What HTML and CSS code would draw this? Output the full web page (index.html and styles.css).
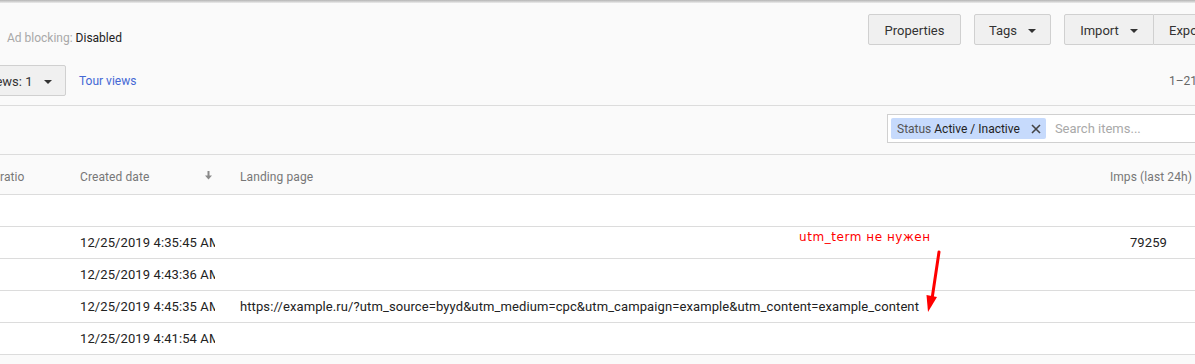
FILE: index.html
```html
<!DOCTYPE html>
<html>
<head>
<meta charset="utf-8">
<link rel="stylesheet" href="styles.css">
</head>
<body>
<div class="page">
  <div class="shadow"></div>
  <section class="toolbar">
    <div class="row1">
      <div class="adblock"><span class="muted">Ad blocking:</span> Disabled</div>
      <div class="actions">
        <button class="btn btn-props">Properties</button>
        <button class="btn btn-tags">Tags <span class="caret"></span></button>
        <div class="group">
          <button class="btn btn-import">Import <span class="caret"></span></button>
          <button class="btn btn-export">Export</button>
        </div>
      </div>
    </div>
    <div class="row2">
      <div class="left2">
        <button class="btn btn-views">Views: 1 <span class="caret"></span></button>
        <a class="tour" href="#">Tour views</a>
      </div>
      <div class="paging">1–21 of 21</div>
    </div>
  </section>
  <section class="filterbar">
    <div class="search">
      <span class="chip"><span class="chip-key">Status</span> Active / Inactive <svg class="chip-x" width="10" height="10" viewBox="0 0 10 10"><path d="M1 1 L9 9 M9 1 L1 9" stroke="#444" stroke-width="1.6"/></svg></span>
      <span class="placeholder">Search items...</span>
    </div>
  </section>
  <div class="table">
    <div class="thead">
      <div class="c c-ratio">ratio</div>
      <div class="c c-date h-date">Created date <span class="sort">
        <svg width="7" height="9" viewBox="0 0 7 9"><rect x="2.5" y="0" width="2" height="5" fill="#8a8a8a"/><path d="M0 4.5 H7 L3.5 8.5 Z" fill="#8a8a8a"/></svg></span></div>
      <div class="c c-land">Landing page</div>
      <div class="c c-imps h-imps">Imps (last 24h)</div>
    </div>
    <div class="tr"><div class="c c-ratio"></div><div class="c c-date"></div><div class="c c-land"></div><div class="c c-imps"></div></div>
    <div class="tr"><div class="c c-ratio"></div><div class="c c-date"><span class="clip">12/25/2019 4:35:45 AM</span></div><div class="c c-land"></div><div class="c c-imps">79259</div></div>
    <div class="tr"><div class="c c-ratio"></div><div class="c c-date"><span class="clip">12/25/2019 4:43:36 AM</span></div><div class="c c-land"></div><div class="c c-imps"></div></div>
    <div class="tr"><div class="c c-ratio"></div><div class="c c-date"><span class="clip">12/25/2019 4:45:35 AM</span></div><div class="c c-land">https://example.ru/?utm_source=byyd&amp;utm_medium=cpc&amp;utm_campaign=example&amp;utm_content=example_content</div><div class="c c-imps"></div></div>
    <div class="tr"><div class="c c-ratio"></div><div class="c c-date"><span class="clip">12/25/2019 4:41:54 AM</span></div><div class="c c-land"></div><div class="c c-imps"></div></div>
  </div>
  <div class="note">utm_term не нужен</div>
  <svg class="arrow" width="30" height="80" viewBox="0 0 30 80">
    <line x1="19" y1="3" x2="12" y2="50" stroke="#f00" stroke-width="3" stroke-linecap="round"/>
    <path d="M6.5 46 L17 48 L8 63 Z" fill="#f00"/>
  </svg>
</div>
</body>
</html>
```
FILE: styles.css
```css
html, body {
  margin: 0;
  padding: 0;
  background: #fafafa;
}
body {
  font-family: Roboto, "Liberation Sans", Arial, sans-serif;
  font-size: 13px;
  color: #222;
  overflow: hidden;
}
.page {
  position: relative;
  width: 1195px;
  height: 364px;
  overflow: hidden;
}
.shadow {
  height: 3px;
  background: linear-gradient(#b4b4b4, #d0d0d0 50%, #ececec);
}
.toolbar {
  border-bottom: 1px solid #dcdcdc;
  padding-bottom: 9px;
}
.row1 {
  display: flex;
  justify-content: space-between;
  align-items: flex-start;
  padding-top: 11px;
  height: 31px;
}
.adblock {
  padding-left: 7px;
  padding-top: 17px;
  font-size: 12px;
  color: #222;
  white-space: nowrap;
}
.muted { color: #a8a8a8; }
.actions {
  display: flex;
  gap: 13px;
  margin-right: -45px;
}
.btn {
  box-sizing: border-box;
  height: 31px;
  background: #f0f0f0;
  border: 1px solid #d0d0d0;
  border-radius: 2px;
  font-family: Roboto, "Liberation Sans", Arial, sans-serif;
  font-size: 13px;
  color: #333;
  padding: 1px 16px 0;
  display: inline-flex;
  align-items: center;
  white-space: nowrap;
  cursor: pointer;
}
.btn-props { width: 93px; justify-content: center; }
.btn-tags { width: 77px; justify-content: center; }
.btn-import { width: 90px; justify-content: center; border-radius: 2px 0 0 2px; }
.btn-export { width: 86px; border-left: none; border-radius: 0 2px 2px 0; padding-left: 15px; }
.group { display: flex; }
.caret {
  display: inline-block;
  width: 0;
  height: 0;
  border-left: 4px solid transparent;
  border-right: 4px solid transparent;
  border-top: 4px solid #333;
  margin-left: 11px;
  margin-top: 1px;
}
.row2 {
  display: flex;
  justify-content: space-between;
  align-items: center;
  margin-top: 20px;
  height: 31px;
}
.left2 {
  display: flex;
  align-items: center;
}
.btn-views {
  margin-left: -33px;
  width: 99px;
  padding-left: 16px;
  flex-shrink: 0;
}
.tour {
  margin-left: 13px;
  margin-top: 1px;
  color: #4468d5;
  text-decoration: none;
  font-size: 12px;
  white-space: nowrap;
}
.paging {
  color: #666;
  font-size: 12px;
  margin-right: -60px;
  width: 86px;
  white-space: nowrap;
}
.filterbar {
  height: 48px;
  border-bottom: 1px solid #dcdcdc;
  display: flex;
  justify-content: flex-end;
  align-items: flex-start;
}
.search {
  box-sizing: border-box;
  margin-top: 8px;
  margin-right: -40px;
  width: 348px;
  height: 29px;
  background: #fff;
  border: 1px solid #d0d0d0;
  display: flex;
  align-items: center;
  padding-left: 3px;
}
.chip {
  height: 21px;
  box-sizing: border-box;
  background: #c6dafc;
  border-radius: 2px;
  padding: 0 5px 0 6px;
  display: inline-flex;
  align-items: center;
  font-size: 12px;
  color: #222;
  white-space: pre;
}
.chip-key { color: #555; }
.chip-x {
  margin-left: 8px;
}
.placeholder {
  margin-left: 9px;
  color: #a9a9a9;
  font-size: 13px;
  white-space: nowrap;
}
.table {
  background: #fff;
}
.thead {
  display: flex;
  height: 40px;
  box-sizing: border-box;
  padding-top: 4px;
  align-items: center;
  border-bottom: 1px solid #dcdcdc;
  background: #fafafa;
  color: #777;
  font-size: 12px;
}
.thead .c { letter-spacing: 0.1px; }
.tr {
  display: flex;
  height: 31px;
  align-items: center;
  border-bottom: 1px solid #dcdcdc;
  background: #fff;
  color: #222;
  letter-spacing: 0.1px;
}
.c { white-space: nowrap; }
.c-ratio { width: 80px; }
.c-date { width: 160px; }
.h-date { display: flex; align-items: center; }
.sort { margin-left: 56px; display: inline-flex; margin-top: -3px; }
.clip {
  display: block;
  width: 135px;
  overflow: hidden;
}
.c-land { flex: 1; }
.c-imps { width: 130px; text-align: right; padding-right: 28px; box-sizing: border-box; }
.h-imps { padding-right: 3px; }
.note {
  position: absolute;
  left: 799px;
  top: 230px;
  color: #f00;
  font-family: "DejaVu Sans", Verdana, sans-serif;
  font-size: 12px;
  letter-spacing: 0.55px;
}
.arrow {
  position: absolute;
  left: 920px;
  top: 249px;
}
```
